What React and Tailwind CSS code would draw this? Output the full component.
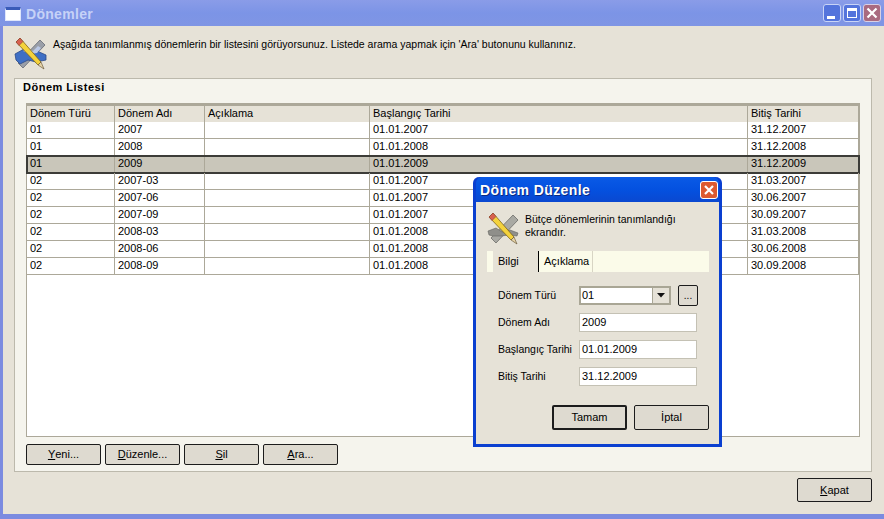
import React from "react";

const columns = [
  { title: "Dönem Türü", width: "w-[88px]" },
  { title: "Dönem Adı", width: "w-[90px]" },
  { title: "Açıklama", width: "w-[165px]" },
  { title: "Başlangıç Tarihi", width: "w-[378px]" },
  { title: "Bitiş Tarihi", width: "flex-1" },
];

const rows = [
  ["01", "2007", "", "01.01.2007", "31.12.2007"],
  ["01", "2008", "", "01.01.2008", "31.12.2008"],
  ["01", "2009", "", "01.01.2009", "31.12.2009"],
  ["02", "2007-03", "", "01.01.2007", "31.03.2007"],
  ["02", "2007-06", "", "01.01.2007", "30.06.2007"],
  ["02", "2007-09", "", "01.01.2007", "30.09.2007"],
  ["02", "2008-03", "", "01.01.2008", "31.03.2008"],
  ["02", "2008-06", "", "01.01.2008", "30.06.2008"],
  ["02", "2008-09", "", "01.01.2008", "30.09.2008"],
];

const ToolsIcon = ({ muted }) => (
  <svg width="34" height="34" viewBox="0 0 34 34">
    {/* ruler */}
    <path d="M5 27 L27 4 L32 9 L10 32 Z" fill={muted ? "#a9a9a3" : "#9a9fa8"} stroke={muted ? "#6c6c68" : "#666b75"} strokeWidth="0.8" />
    {/* tool body */}
    {muted ? (
      <path d="M2 20 L10 17 L16 21 L24 19 L32 22 L31 25 L23 24 L15 25 L7 25 L3 24 Z" fill="#8f8f8a" stroke="#62625e" strokeWidth="0.6" />
    ) : (
      <>
        <path d="M2 18 L11 13 L19 16 L24 15 L33 19 L33 24 L23 26 L15 24 L7 28 L3 24 Z" fill="#3f6fc4" stroke="#2c4a86" strokeWidth="0.8" />
        <path d="M10 15 L14 13 L20 15 L25 10 L28 12 L24 17 L18 18 Z" fill="#b9c8e6" />
      </>
    )}
    {/* pencil */}
    <path d="M3 6 L7 2 L28 26 L25 29 Z" fill="#f4d23c" stroke="#7d651a" strokeWidth="0.8" />
    <path d="M3 6 L7 2 L10 5.5 L6 9.5 Z" fill="#d8604f" stroke="#8a4036" strokeWidth="0.6" />
    <path d="M25 29 L28 26 L31 33 Z" fill="#e6d3a6" stroke="#5b4a2a" strokeWidth="0.6" />
  </svg>
);

const Button = ({ children, size = "w-[75px] h-[21px]", strong }) => (
  <button
    className={`${size} flex items-center justify-center rounded-[2px] bg-[#dedad0] text-[11px] text-black ${
      strong ? "border-2 border-[#1c1c1c]" : "border border-[#1c1c1c]"
    }`}
  >
    {children}
  </button>
);

const Key = ({ children }) => <span className="underline">{children}</span>;

const Field = ({ label, value }) => (
  <div className="flex items-center h-[19px]">
    <span className="w-[81px] text-[10.5px] whitespace-nowrap">{label}</span>
    <div className="w-[118px] h-[19px] border border-[#c4c1b4] bg-white px-[2px] text-[11px] leading-[16px]">
      {value}
    </div>
  </div>
);

const Dialog = () => (
  <div className="absolute left-[473px] top-[177px] w-[249px] h-[270px] flex flex-col rounded-t-[6px] bg-[#0a3fd0] border-[3px] border-t-0 border-[#0a3fd0]">
    <div className="h-[25px] flex items-center justify-between pl-[4px] pr-[1px] rounded-t-[6px] bg-gradient-to-b from-[#0a5ae6] via-[#0451e0] to-[#0a48d0]">
      <span className="text-white font-bold text-[14px] tracking-[0.4px] pt-[2px] [text-shadow:1px_1px_0_#0a2a80]">Dönem Düzenle</span>
      <div className="w-[18px] h-[18px] rounded-[3px] border border-white bg-[#dd5a30] flex items-center justify-center">
        <svg width="12" height="12" viewBox="0 0 12 12">
          <path d="M2 2 L10 10 M10 2 L2 10" stroke="white" strokeWidth="2.2" />
        </svg>
      </div>
    </div>
    <div className="flex-1 bg-[#e6e2d7] flex flex-col">
      <div className="flex items-start pl-[10px] pt-[9px] h-[49px]">
        <ToolsIcon muted />
        <p className="ml-[5px] mt-[2px] text-[10.5px] leading-[13px] w-[165px] text-black">
          Bütçe dönemlerinin tanımlandığı ekrandır.
        </p>
      </div>
      <div className="ml-[11px] mr-[10px] h-[21px] flex bg-[#fbfbe9]">
        <div className="ml-[6px] w-[46px] bg-[#e6e2d7] border-r border-black pl-[5px] text-[11px] leading-[21px]">Bilgi</div>
        <div className="w-[54px] border-r border-[#d8d5c4] pl-[5px] text-[11px] leading-[21px]">Açıklama</div>
      </div>
      <div className="flex flex-col gap-[8px] pl-[22px] mt-[14px]">
        <div className="flex items-center h-[19px]">
          <span className="w-[81px] text-[10.5px]">Dönem Türü</span>
          <div className="w-[92px] h-[19px] flex border-2 border-[#a9a695] bg-white">
            <span className="flex-1 px-[1px] text-[11px] leading-[15px]">01</span>
            <div className="w-[17px] bg-[#e6e2d7] border-l border-[#a9a695] flex items-center justify-center">
              <svg width="9" height="5" viewBox="0 0 9 5"><path d="M0 0 H8 L4 4.5 Z" fill="#111" /></svg>
            </div>
          </div>
          <div className="ml-[7px] w-[20px] h-[21px] flex items-center justify-center rounded-[2px] border border-[#1c1c1c] bg-[#dedad0] text-[10px]">...</div>
        </div>
        <Field label="Dönem Adı" value="2009" />
        <Field label="Başlangıç Tarihi" value="01.01.2009" />
        <Field label="Bitiş Tarihi" value="31.12.2009" />
      </div>
      <div className="flex justify-end gap-[7px] pr-[10px] mt-[19px]">
        <Button size="w-[75px] h-[25px]" strong>Tamam</Button>
        <Button size="w-[75px] h-[25px]">İptal</Button>
      </div>
    </div>
  </div>
);

const App = () => {
  return (
    <div className="relative w-[884px] h-[519px] flex flex-col overflow-hidden font-['Liberation_Sans',sans-serif] text-[11px] text-black bg-[#e6e2d7]">
      {/* title bar */}
      <div className="h-[26px] flex items-center justify-between pl-[5px] pr-[3px] bg-gradient-to-b from-[#8a9ce8] via-[#7c94e6] to-[#7f95e4]">
        <div className="flex items-center gap-[5px]">
          <div className="w-[16px] h-[14px] mt-[1px] rounded-[1px] border border-[#dfe6fb] border-t-[3px] border-t-[#3a5bb8] bg-white" />
          <span className="font-bold text-[14px] tracking-[0.3px] pt-[2px] text-[#c6d2f7]">Dönemler</span>
        </div>
        <div className="flex gap-[2px]">
          <div className="w-[18px] h-[18px] rounded-[3px] border border-[#c9d4f6] bg-[#5474dc] flex items-end pl-[3px] pb-[2px]">
            <div className="w-[8px] h-[3px] bg-white" />
          </div>
          <div className="w-[18px] h-[18px] rounded-[3px] border border-[#c9d4f6] bg-[#5474dc] flex items-center justify-center">
            <div className="w-[10px] h-[10px] border border-t-[3px] border-white" />
          </div>
          <div className="w-[18px] h-[18px] rounded-[3px] border border-[#d9d0e4] bg-[#a96a80] flex items-center justify-center">
            <svg width="12" height="12" viewBox="0 0 12 12">
              <path d="M1.5 1.5 L10.5 10.5 M10.5 1.5 L1.5 10.5" stroke="white" strokeWidth="2.2" />
            </svg>
          </div>
        </div>
      </div>

      {/* window body */}
      <div className="flex-1 flex flex-col border-l-[3px] border-b-[5px] border-[#7b8be0]">
        <div className="h-[52px] flex items-start pl-[10px] pt-[10px]">
          <ToolsIcon />
          <p className="ml-[6px] mt-[1px] text-[10.5px] whitespace-nowrap">
            Aşağıda tanımlanmış dönemlerin bir listesini görüyorsunuz. Listede arama yapmak için 'Ara' butonunu kullanınız.
          </p>
        </div>

        <section className="ml-[11px] mr-[12px] h-[394px] flex flex-col bg-[#f5f4ed] border border-[#bcb9ac] px-[11px]">
          <h2 className="h-[24px] -ml-[3px] font-bold text-[11px] tracking-[0.5px]">Dönem Listesi</h2>
          <div className="h-[334px] flex flex-col border border-[#aca899] bg-white">
            <div className="h-[18px] flex bg-[#e6e2d7] border-t-2 border-[#aca899]">
              {columns.map((col) => (
                <div key={col.title} className={`${col.width} pl-[3px] text-[11px] leading-[14px] border-r border-[#aca899]`}>
                  {col.title}
                </div>
              ))}
            </div>
            {rows.map((row) => {
              const selected = row[1] === "2009";
              return (
                <div
                  key={row[1]}
                  className={`h-[17px] flex border-b border-[#aca899] ${
                    selected ? "bg-[#c9c6ba] outline outline-2 -outline-offset-1 outline-[#3c3c38]" : ""
                  }`}
                >
                  {row.map((cell, i) => (
                    <div key={i} className={`${columns[i].width} pl-[3px] text-[11px] leading-[15px] border-r border-[#aca899]`}>
                      {cell}
                    </div>
                  ))}
                </div>
              );
            })}
          </div>
          <div className="flex gap-[4px] mt-[7px]">
            <Button><Key>Y</Key>eni...</Button>
            <Button><Key>D</Key>üzenle...</Button>
            <Button><Key>S</Key>il</Button>
            <Button><Key>A</Key>ra...</Button>
          </div>
        </section>

        <div className="flex justify-end pr-[12px] mt-[6px]">
          <Button size="w-[75px] h-[24px]"><Key>K</Key>apat</Button>
        </div>
      </div>

      <Dialog />
    </div>
  );
};

export default App;
